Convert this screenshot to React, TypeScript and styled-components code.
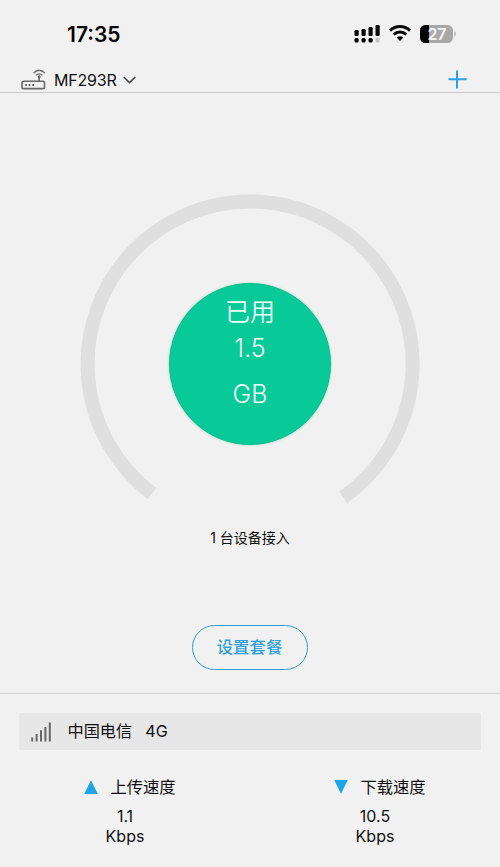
import React from 'react';
import styled, { createGlobalStyle } from 'styled-components';

const GlobalStyle = createGlobalStyle`
  * { box-sizing: border-box; }
  body {
    margin: 0;
    background: #f1f1f1;
    color: #111;
    font-family: Inter, "Noto Sans CJK SC", sans-serif;
  }
  svg { display: block; flex: none; }
`;

const Screen = styled.main`
  width: 500px;
  height: 867px;
  display: flex;
  flex-direction: column;
  overflow: hidden;
  background: #f1f1f1;
`;

const StatusBar = styled.div`
  height: 67px;
  padding: 0 44px 0 67px;
  display: flex;
  align-items: center;
  justify-content: space-between;
`;

const Clock = styled.span`
  font-size: 21px;
  font-weight: 600;
  color: #050505;
  padding-top: 1px;
`;

const StatusIcons = styled.div`
  display: flex;
  align-items: center;
  gap: 9px;
`;

const Header = styled.header`
  height: 26px;
  padding: 0 33px 0 21px;
  display: flex;
  align-items: center;
  justify-content: space-between;
  border-bottom: 1px solid #c8c8c8;
`;

const DeviceButton = styled.button`
  display: flex;
  align-items: center;
  padding: 0;
  border: 0;
  background: none;
  color: #111;
  font: 400 16px/24px Inter, sans-serif;
`;

const DeviceName = styled.span`
  margin: 0 6px 0 8px;
  letter-spacing: -0.2px;
`;

const AddButton = styled.button`
  padding: 0;
  border: 0;
  background: none;
`;

const Usage = styled.section`
  height: 600px;
  padding-top: 101px;
  display: flex;
  flex-direction: column;
  align-items: center;
`;

const Gauge = styled.div`
  display: grid;
  place-items: center;
  width: 340px;
  height: 340px;
  > * { grid-area: 1 / 1; }
`;

const UsageDisc = styled.div`
  width: 162px;
  height: 162px;
  margin-bottom: 1px;
  padding-top: 10px;
  border-radius: 50%;
  border: 1px solid #14b98a;
  background: #08ca98;
  box-shadow: 0 0 2px 0.5px #a5e4d2;
  color: #f0fffa;
  text-align: center;
  font-size: 25px;
  font-weight: 350;
`;

const DiscLine = styled.div<{ $height: number }>`
  height: ${({ $height }) => $height}px;
  line-height: ${({ $height }) => $height}px;
`;

const Connected = styled.p`
  margin: -8px 0 0;
  height: 24px;
  font-size: 14px;
  line-height: 24px;
`;

const PlanButton = styled.button`
  width: 116px;
  height: 45px;
  margin-top: 75px;
  padding: 0 1px 1px 0;
  border: 1px solid #2f9fd8;
  border-radius: 23px;
  background: transparent;
  color: #2f9fd8;
  font: 500 16.4px/40px Inter, "Noto Sans CJK SC", sans-serif;
`;

const Network = styled.section`
  height: 174px;
  padding: 19px 19px 0 18.5px;
  border-top: 1px solid #cecece;
`;

const CarrierBar = styled.div`
  height: 37px;
  padding-left: 12px;
  display: flex;
  align-items: center;
  background: #e7e7e7;
  font-size: 16.2px;
  line-height: 37px;
`;

const Carrier = styled.span`
  margin: 0 13px 0 17px;
`;

const Speeds = styled.div`
  display: grid;
  grid-template-columns: 250px 250px;
  margin: 25px -19px 0 -18.5px;
`;

const Speed = styled.div`
  display: flex;
  flex-direction: column;
  align-items: center;
  font-size: 16px;
`;

const SpeedTitle = styled.div`
  display: flex;
  align-items: center;
  gap: 12px;
  height: 24px;
  margin: 0 0 7px 10px;
  font-size: 16.3px;
  line-height: 24px;
`;

const SpeedValue = styled.span`
  line-height: 20px;
`;

const SignalIcon = () => (
  <svg width="26" height="18" viewBox="0 0 26 18">
    {[5, 4, 2, 0].map((y, i) => (
      <rect key={y} x={0.5 + i * 7} y={y} width="4.2" height={11 - y} rx="1.3" fill="#080808" />
    ))}
    {[0, 1, 2, 3].map((i) => (
      <rect key={i} x={0.5 + i * 7} y="13" width="4.2" height="4.5" rx="1.5" fill={i === 3 ? '#c3c3c3' : '#080808'} />
    ))}
  </svg>
);

const WifiIcon = () => (
  <svg width="22" height="17" viewBox="0 0 22 17" fill="none" stroke="#080808" strokeWidth="2.9">
    <path d="M1 5.6C6.7.2 15.3.2 21 5.6" />
    <path d="M4.6 9.5c3.7-3.4 9.1-3.4 12.8 0" />
    <path d="M7.7 12.5c1.9-1.7 4.7-1.7 6.6 0L11 15.9z" fill="#080808" stroke="none" />
  </svg>
);

const BatteryIcon = () => (
  <svg width="36" height="18" viewBox="0 0 36 18">
    <defs>
      <clipPath id="battery-shell"><rect width="33" height="18" rx="5.5" /></clipPath>
    </defs>
    <g clipPath="url(#battery-shell)">
      <rect width="33" height="18" fill="#a8a8a8" />
      <rect width="9" height="18" fill="#050505" />
    </g>
    <path d="M34.3 6.3c1.9.7 1.9 4.7 0 5.4z" fill="#aaa" />
    <text x="16.8" y="14.7" textAnchor="middle" fill="#f5f5f5" fontFamily="Inter" fontSize="16" fontWeight="600" letterSpacing="-0.4">27</text>
  </svg>
);

const RouterIcon = () => (
  <svg width="25" height="21" viewBox="0 0 25 21" fill="none" stroke="#686868" strokeWidth="1.6">
    <rect x="1" y="12.2" width="22.5" height="7.4" rx="1.7" />
    <path d="M18.2 6.5v5.7" />
    <path d="M12.6 4.1c3.1-3.8 8.1-3.8 11.2 0M15 6.4c1.8-2.1 4.6-2.1 6.4 0" strokeWidth="1.4" />
    <circle cx="18.2" cy="8" r="1.4" fill="#686868" stroke="none" />
    <path d="M4.2 16h1.8M7.7 16h1.8M11.2 16H13" strokeWidth="1.8" />
  </svg>
);

const ChevronIcon = () => (
  <svg width="13" height="8" viewBox="0 0 13 8" fill="none" stroke="#444" strokeWidth="1.5">
    <path d="M.8 1l5.7 5.6L12.2 1" />
  </svg>
);

const PlusIcon = () => (
  <svg width="19" height="19" viewBox="0 0 19 19" stroke="#2b9fdf" strokeWidth="2">
    <path d="M9 .4v18.2M.4 9.2h18.2" />
  </svg>
);

const UsageTrack = () => (
  <svg width="340" height="340" viewBox="80 194 340 340">
    <path d="M152 493.6A162.5 162.5 0 1 1 343.2 497.2" fill="none" stroke="#dfdfdf" strokeWidth="14" />
  </svg>
);

const CarrierSignalIcon = () => (
  <svg width="20" height="20" viewBox="0 0 20 20" stroke="#666" strokeWidth="2">
    <path d="M1.2 19.5v-4M5.6 19.5V12M10 19.5V8.3M14.4 19.5V5M18.8 19.5V.5" />
  </svg>
);

const Arrow = ({ up }: { up?: boolean }) => (
  <svg width="14" height="14" viewBox="0 0 14 14" fill="#1da4ea">
    <path d={up ? 'M7 .3L13.8 14H.2z' : 'M.2 0h13.6L7 13.8z'} />
  </svg>
);

const SpeedItem = ({ title, value, up }: { title: string; value: string; up?: boolean }) => (
  <Speed>
    <SpeedTitle>
      <Arrow up={up} />
      <span>{title}</span>
    </SpeedTitle>
    <SpeedValue>{value}</SpeedValue>
    <SpeedValue>Kbps</SpeedValue>
  </Speed>
);

export default function App() {
  return (
    <>
      <GlobalStyle />
      <Screen>
        <StatusBar>
          <Clock>17:35</Clock>
          <StatusIcons>
            <SignalIcon />
            <WifiIcon />
            <BatteryIcon />
          </StatusIcons>
        </StatusBar>
        <Header>
          <DeviceButton>
            <RouterIcon />
            <DeviceName>MF293R</DeviceName>
            <ChevronIcon />
          </DeviceButton>
          <AddButton aria-label="添加">
            <PlusIcon />
          </AddButton>
        </Header>
        <Usage>
          <Gauge>
            <UsageTrack />
            <UsageDisc>
              <DiscLine $height={36}>已用</DiscLine>
              <DiscLine $height={36}>1.5</DiscLine>
              <DiscLine $height={56}>GB</DiscLine>
            </UsageDisc>
          </Gauge>
          <Connected>1 台设备接入</Connected>
          <PlanButton>设置套餐</PlanButton>
        </Usage>
        <Network>
          <CarrierBar>
            <CarrierSignalIcon />
            <Carrier>中国电信</Carrier>
            <span>4G</span>
          </CarrierBar>
          <Speeds>
            <SpeedItem title="上传速度" value="1.1" up />
            <SpeedItem title="下载速度" value="10.5" />
          </Speeds>
        </Network>
      </Screen>
    </>
  );
}
